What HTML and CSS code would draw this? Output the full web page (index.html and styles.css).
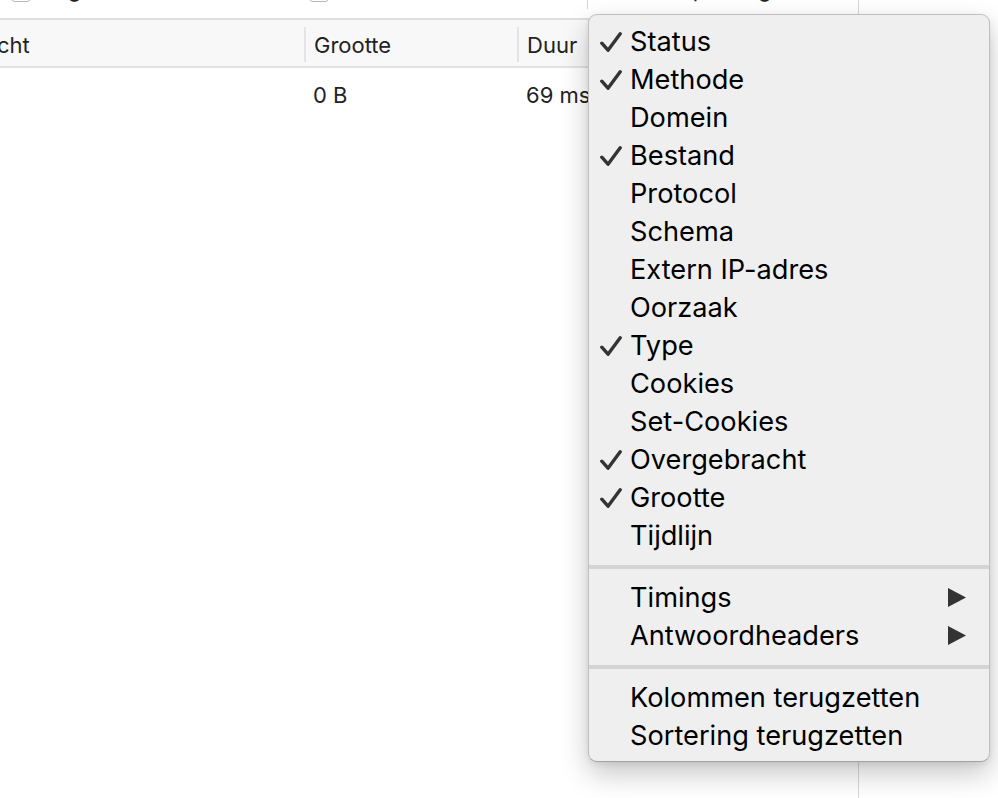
FILE: index.html
```html
<!DOCTYPE html>
<html lang="nl">
<head>
<meta charset="utf-8">
<title>Netwerk</title>
<link rel="stylesheet" href="styles.css">
</head>
<body>
<div class="page">
  <div class="main">
    <div class="toolbar">
      <div class="tb-item first"><span class="cb"></span><span class="tb-label">Logboek behouden</span></div>
      <div class="tb-item second"><span class="cb"></span><span class="tb-label">Cache uitschakelen</span></div>
      <span class="tb-div"></span>
      <span class="tb-label throttle">Geen beperking</span>
    </div>
    <div class="table">
      <div class="row thead">
        <div class="cell c1">Overgebracht</div>
        <div class="cell c2 sep">Grootte</div>
        <div class="cell c3 sep">Duur</div>
      </div>
      <div class="row tbody">
        <div class="cell c1"></div>
        <div class="cell c2">0 B</div>
        <div class="cell c3">69 ms</div>
      </div>
    </div>
  </div>
  <div class="side"></div>
</div>

<div class="menu">
  <div class="group">
    <div class="item checked"><span class="check"><svg viewBox="0 0 22 20" width="22" height="20"><path d="M1.8 11.2 L8 18.2 L20.2 1.8" fill="none" stroke="#333" stroke-width="3.4" stroke-linecap="round" stroke-linejoin="round"/></svg></span>Status</div>
    <div class="item checked"><span class="check"><svg viewBox="0 0 22 20" width="22" height="20"><path d="M1.8 11.2 L8 18.2 L20.2 1.8" fill="none" stroke="#333" stroke-width="3.4" stroke-linecap="round" stroke-linejoin="round"/></svg></span>Methode</div>
    <div class="item">Domein</div>
    <div class="item checked"><span class="check"><svg viewBox="0 0 22 20" width="22" height="20"><path d="M1.8 11.2 L8 18.2 L20.2 1.8" fill="none" stroke="#333" stroke-width="3.4" stroke-linecap="round" stroke-linejoin="round"/></svg></span>Bestand</div>
    <div class="item">Protocol</div>
    <div class="item">Schema</div>
    <div class="item">Extern IP-adres</div>
    <div class="item">Oorzaak</div>
    <div class="item checked"><span class="check"><svg viewBox="0 0 22 20" width="22" height="20"><path d="M1.8 11.2 L8 18.2 L20.2 1.8" fill="none" stroke="#333" stroke-width="3.4" stroke-linecap="round" stroke-linejoin="round"/></svg></span>Type</div>
    <div class="item">Cookies</div>
    <div class="item">Set-Cookies</div>
    <div class="item checked"><span class="check"><svg viewBox="0 0 22 20" width="22" height="20"><path d="M1.8 11.2 L8 18.2 L20.2 1.8" fill="none" stroke="#333" stroke-width="3.4" stroke-linecap="round" stroke-linejoin="round"/></svg></span>Overgebracht</div>
    <div class="item checked"><span class="check"><svg viewBox="0 0 22 20" width="22" height="20"><path d="M1.8 11.2 L8 18.2 L20.2 1.8" fill="none" stroke="#333" stroke-width="3.4" stroke-linecap="round" stroke-linejoin="round"/></svg></span>Grootte</div>
    <div class="item">Tijdlijn</div>
  </div>
  <div class="separator"></div>
  <div class="group">
    <div class="item sub">Timings<svg class="arrow" viewBox="0 0 18 19" width="18" height="19"><polygon points="0,0 18,9.5 0,19" fill="#333"/></svg></div>
    <div class="item sub">Antwoordheaders<svg class="arrow" viewBox="0 0 18 19" width="18" height="19"><polygon points="0,0 18,9.5 0,19" fill="#333"/></svg></div>
  </div>
  <div class="separator"></div>
  <div class="group">
    <div class="item">Kolommen terugzetten</div>
    <div class="item">Sortering terugzetten</div>
  </div>
</div>
</body>
</html>
```

FILE: styles.css
```css
html, body {
  margin: 0;
  padding: 0;
  background: #ffffff;
  overflow: hidden;
}
body {
  width: 998px;
  height: 798px;
  position: relative;
  font-family: "Inter", "Roboto", "Liberation Sans", sans-serif;
  color: #222;
}
.page {
  display: flex;
  margin-top: -22px;
  height: 820px;
}
.main {
  width: 858px;
  flex: none;
  overflow: hidden;
}
.side {
  flex: 1;
  border-left: 1px solid #d3d7dc;
  background: #ffffff;
}

/* toolbar */
.toolbar {
  height: 42px;
  box-sizing: border-box;
  border-bottom: 2px solid #dedede;
  display: flex;
  align-items: flex-start;
  font-size: 22px;
  color: #222;
}
.tb-item {
  display: flex;
  align-items: flex-start;
  gap: 10px;
}
.tb-item.first { margin-left: 10px; }
.tb-item.second { margin-left: 64px; }
.cb {
  width: 20px;
  height: 20px;
  margin-top: 2px;
  border: 1px solid #b8b8b8;
  border-radius: 5px;
  background: #fff;
}
.tb-label {
  line-height: 24px;
  margin-top: -1px;
}
.tb-div {
  width: 1px;
  height: 31px;
  background: #d6d6d6;
  margin-left: 44px;
}
.throttle { margin-left: 17px; }

/* table */
.table {
  margin-left: -121px;
  font-size: 22px;
  color: #222;
}
.row {
  display: grid;
  grid-template-columns: 425px 213px 300px;
}
.thead {
  height: 48px;
  box-sizing: border-box;
  background: #f8f8f8;
  border-bottom: 2px solid #e2e2e2;
  align-items: stretch;
}
.thead .cell {
  position: relative;
  padding-left: 10px;
  padding-top: 5px;
  line-height: 41px;
}
.thead .c1 { padding-left: 8px; }
.thead .sep::before {
  content: "";
  position: absolute;
  left: 0;
  top: 7px;
  bottom: 4px;
  width: 2px;
  background: #e4e4e4;
}
.tbody {
  height: 54px;
  align-items: center;
}
.tbody .cell {
  padding-left: 9px;
  line-height: 54px;
}

/* context menu */
.menu {
  position: absolute;
  left: 588px;
  top: 14px;
  width: 402px;
  height: 748px;
  box-sizing: border-box;
  padding: 8px 0;
  background: #efefef;
  border: 1px solid rgba(0, 0, 0, 0.2);
  border-bottom-color: rgba(0, 0, 0, 0.32);
  border-radius: 9px;
  box-shadow: 0 12px 28px rgba(0, 0, 0, 0.22), 0 2px 6px rgba(0, 0, 0, 0.08);
  font-size: 27.2px;
  color: #000;
}
.item {
  height: 38px;
  line-height: 38px;
  padding-left: 41px;
  position: relative;
  white-space: nowrap;
}
.check {
  position: absolute;
  left: 11px;
  top: 9px;
  width: 22px;
  height: 20px;
  display: block;
}
.check svg { display: block; }
.arrow {
  position: absolute;
  left: 359px;
  top: 9px;
}
.separator {
  height: 4px;
  margin: 10px 0;
  background: #d4d4d4;
}
```
